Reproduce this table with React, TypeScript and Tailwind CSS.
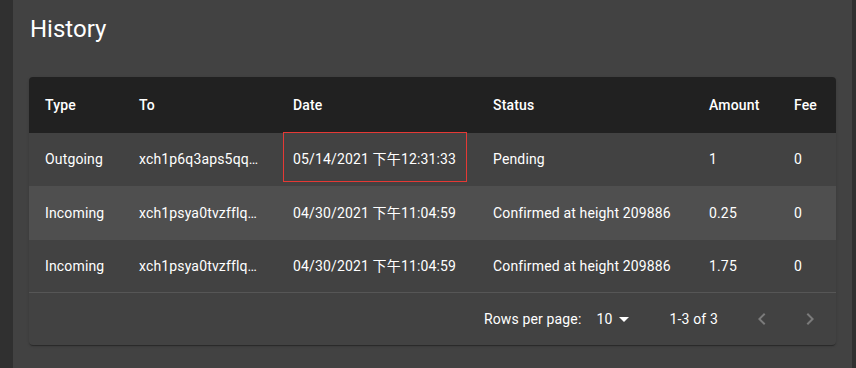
import React from "react";

type Row = {
  type: string;
  to: string;
  date: string;
  status: string;
  amount: string;
  fee: string;
};

const rows: Row[] = [
  { type: "Outgoing", to: "xch1p6q3aps5qqxyz", date: "05/14/2021 下午12:31:33", status: "Pending", amount: "1", fee: "0" },
  { type: "Incoming", to: "xch1psya0tvzfflqxyz", date: "04/30/2021 下午11:04:59", status: "Confirmed at height 209886", amount: "0.25", fee: "0" },
  { type: "Incoming", to: "xch1psya0tvzfflqxyz", date: "04/30/2021 下午11:04:59", status: "Confirmed at height 209886", amount: "1.75", fee: "0" },
];

const font = { fontFamily: "Roboto, 'Noto Sans CJK SC', sans-serif" };

const App: React.FC = () => {
  return (
    <div className="flex w-[856px] h-[368px] overflow-hidden bg-[#303030] text-white" style={font}>
      <div className="w-[13px] shrink-0" />
      <div className="flex-1 bg-[#424242] px-4 pt-[13px]">
        <h1 className="text-[24px] leading-[32px] font-normal pl-[1px]">History</h1>

        <div className="mt-8 rounded bg-[#424242] shadow-[0_2px_1px_-1px_rgba(0,0,0,0.2),0_1px_1px_0_rgba(0,0,0,0.14),0_1px_3px_0_rgba(0,0,0,0.12)]">
          {/* header */}
          <div className="flex h-[56px] items-center rounded-t bg-[#212121] text-[14px] font-medium tracking-[0.01071em]">
            <div className="w-[94px] pl-4">Type</div>
            <div className="w-[154px] pl-4">To</div>
            <div className="w-[200px] pl-4">Date</div>
            <div className="w-[216px] pl-4">Status</div>
            <div className="w-[85px] pl-4">Amount</div>
            <div className="flex-1 pl-4">Fee</div>
          </div>

          {rows.map((row, i) => (
            <div
              key={i}
              className={
                "flex items-center text-[14px] tracking-[0.01071em] " +
                (i === 1 ? "h-[54px] bg-[#4f4f4f]" : "h-[53px] bg-[#424242]") +
                (i === rows.length - 1 ? " border-b border-[#565656]" : "")
              }
            >
              <div className="w-[94px] pl-4">{row.type}</div>
              <div className="w-[154px] pl-4 pr-[18px] truncate">{row.to}</div>
              <div className="relative w-[200px] pl-4 h-full flex items-center">
                {i === 0 && (
                  <div className="absolute left-[6px] top-[-1px] w-[184px] h-[50px] border border-[#e53935]" />
                )}
                {row.date}
              </div>
              <div className="w-[216px] pl-4">{row.status}</div>
              <div className="w-[85px] pl-4">{row.amount}</div>
              <div className="flex-1 pl-4">{row.fee}</div>
            </div>
          ))}

          {/* pagination */}
          <div className="flex h-[52px] items-center justify-end pr-[2px] text-[14px] tracking-[0.01071em]">
            <span>Rows per page:</span>
            <span className="ml-[15px]">10</span>
            <svg width="24" height="24" viewBox="0 0 24 24" className="ml-[-1px]" fill="currentColor">
              <path d="M7 10l5 5 5-5z" />
            </svg>
            <span className="ml-[34px]">1-3 of 3</span>
            <div className="ml-[20px] flex">
              <div className="flex h-[48px] w-[48px] items-center justify-center text-[#7b7b7b]">
                <svg width="24" height="24" viewBox="0 0 24 24" fill="currentColor">
                  <path d="M15.41 7.41L14 6l-6 6 6 6 1.41-1.41L10.83 12z" />
                </svg>
              </div>
              <div className="flex h-[48px] w-[48px] items-center justify-center text-[#7b7b7b]">
                <svg width="24" height="24" viewBox="0 0 24 24" fill="currentColor">
                  <path d="M10 6L8.59 7.41 13.17 12l-4.58 4.59L10 18l6-6z" />
                </svg>
              </div>
            </div>
          </div>
        </div>
      </div>
      <div className="w-[4px] shrink-0" />
    </div>
  );
};

export default App;
